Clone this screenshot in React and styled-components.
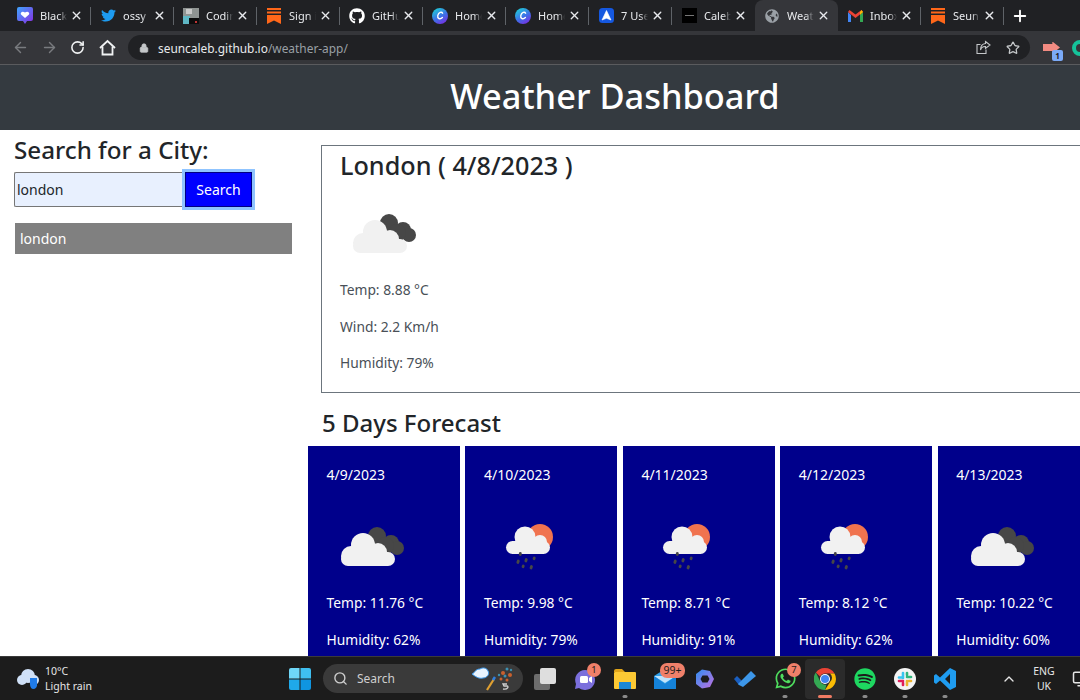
import React from 'react'
import styled, { createGlobalStyle } from 'styled-components'
import { ArrowLeft, ArrowRight, RotateCw, Lock, Star, Plus, X, Search as SearchGlyph, ChevronUp, Monitor } from 'lucide-react'
import { FaTwitter, FaGithub, FaGlobeAmericas, FaSpotify, FaWhatsapp } from 'react-icons/fa'

const GlobalStyle = createGlobalStyle`
  html, body {
    margin: 0;
    padding: 0;
    background: #fff;
    overflow: hidden;
  }
  * {
    box-sizing: border-box;
  }
  body {
    font-family: "Noto Sans", "Open Sans", "Liberation Sans", sans-serif;
    color: #212529;
  }
`

const Screen = styled.div`
  width: 1080px;
  height: 700px;
  display: flex;
  flex-direction: column;
  overflow: hidden;
`

/* browser chrome */
const TabStrip = styled.div`
  height: 31px;
  flex: none;
  background: #202124;
  display: flex;
  padding-left: 8px;
`

const TabItem = styled.div`
  position: relative;
  width: 83px;
  height: 31px;
  flex: none;
  display: flex;
  align-items: center;
  padding-left: 9px;
  background: ${p => p.$active ? '#35363a' : 'transparent'};
  border-radius: ${p => p.$active ? '8px 8px 0 0' : '0'};

  &::after {
    content: '';
    display: ${p => p.$divider ? 'block' : 'none'};
    position: absolute;
    right: 0;
    top: 7px;
    width: 1px;
    height: 18px;
    background: #5f6368;
  }
`

const TabIcon = styled.span`
  width: 16px;
  height: 16px;
  flex: none;
  display: flex;
  align-items: center;
  justify-content: center;
`

const TabTitle = styled.span`
  width: 27px;
  margin-left: 7px;
  overflow: hidden;
  white-space: nowrap;
  font-size: 11px;
  color: #e8eaed;
  -webkit-mask-image: linear-gradient(90deg, #000 70%, transparent);
  mask-image: linear-gradient(90deg, #000 70%, transparent);
`

const TabClose = styled(X)`
  margin-left: 3px;
  flex: none;
  color: #e8eaed;
`

const NewTab = styled(Plus)`
  margin: 7px 0 0 7px;
  color: #fff;
`

const Toolbar = styled.div`
  height: 34px;
  flex: none;
  background: #35363a;
  border-bottom: 1px solid #5a5b5e;
  display: flex;
  align-items: center;
  padding-left: 12px;
`

const NavButton = styled.span`
  width: 29px;
  flex: none;
  display: flex;
  align-items: center;
  color: ${p => p.$off ? '#797b7f' : '#f1f3f4'};
`

const Omnibox = styled.div`
  width: 902px;
  height: 25px;
  flex: none;
  border-radius: 13px;
  background: #202124;
  display: flex;
  align-items: center;
  padding: 0 10px 0 11px;
  font-size: 11.9px;
  color: #e8eaed;
`

const Url = styled.span`
  margin-left: 9px;
  flex: 1;
  span {
    color: #9aa0a6;
  }
`

const OmniIcon = styled.span`
  display: flex;
  margin-left: 15px;
  color: #c4c7c9;
`

const ExtSlot = styled.span`
  position: relative;
  width: 17px;
  height: 12px;
  margin-left: 13px;
  flex: none;
`

const Extension = styled.span`
  display: block;
  width: 17px;
  height: 12px;
  background: #f28b82;
  clip-path: polygon(0 20%, 55% 20%, 55% 0, 100% 50%, 55% 100%, 55% 80%, 0 80%);
`

const ExtBadge = styled.span`
  position: absolute;
  left: 9px;
  top: 8px;
  width: 11px;
  height: 11px;
  border-radius: 2px;
  background: #7baaf7;
  color: #202124;
  font-size: 8px;
  font-weight: 700;
  line-height: 11px;
  text-align: center;
`

const GrammarlyDot = styled.span`
  width: 16px;
  height: 16px;
  margin-left: 12px;
  flex: none;
  border-radius: 50%;
  border: 4px solid #15c39a;
`

/* page */
const Header = styled.header`
  height: 65px;
  flex: none;
  background: #343a40;
  color: #fff;
  display: flex;
  align-items: center;
  justify-content: center;
  padding: 0 0 3px 150px;
`

const Title = styled.h1`
  margin: 0;
  font-size: 34.4px;
  font-weight: 500;
  line-height: 1.2;
`

const Page = styled.main`
  flex: 1;
  min-height: 0;
  display: flex;
  overflow: hidden;
`

const Sidebar = styled.aside`
  width: 308px;
  flex: none;
  padding: 5px 0 0 14px;
`

const SideHeading = styled.h2`
  margin: 0;
  font-size: 24.2px;
  font-weight: 500;
  line-height: 30px;
`

const SearchForm = styled.form`
  display: flex;
  margin-top: 7px;
`

const SearchInput = styled.input`
  width: 171px;
  height: 35px;
  padding: 0 2px;
  border: 1px solid #767676;
  border-right: 0;
  border-radius: 2px 0 0 2px;
  background: #e8f0fe;
  font: inherit;
  font-size: 14px;
  color: #212529;
  outline: none;
`

const SearchButton = styled.button`
  width: 67px;
  height: 35px;
  padding: 0;
  border: 1px solid #000080;
  background: #0000ff;
  color: #fff;
  font: inherit;
  font-size: 14px;
  box-shadow: 0 0 0 3px #8fc4ff;
`

const History = styled.ul`
  list-style: none;
  margin: 16px 0 0 1px;
  padding: 0;
  width: 277px;
`

const HistoryItem = styled.li`
  height: 31px;
  padding-left: 5px;
  background: #808080;
  color: #fff;
  font-size: 14px;
  line-height: 31px;
`

const Content = styled.section`
  flex: 1;
  min-width: 0;
  padding-top: 15px;
`

const CurrentCard = styled.div`
  margin-left: 13px;
  width: 900px;
  height: 248px;
  border: 1px solid #6c757d;
  padding: 1px 0 0 18px;
`

const CityTitle = styled.h2`
  margin: 0;
  font-size: 25.2px;
  font-weight: 500;
  line-height: 36px;
`

const CurrentIcon = styled.div`
  margin-top: 26px;
  margin-left: 8px;
  height: 50px;
`

const Stat = styled.p`
  margin: 0 0 15.5px;
  font-size: 13.8px;
  line-height: 21px;
  color: ${p => p.$light ? '#fff' : '#495057'};
`

const CurrentStats = styled.div`
  margin-top: 20px;
`

const ForecastHeading = styled.h2`
  margin: 12px 0 0 14px;
  font-size: 24px;
  font-weight: 500;
  line-height: 36px;
`

const ForecastRow = styled.div`
  display: flex;
  gap: 5.4px;
  margin: 5px 0 0 0.1px;
  width: 790px;
`

const DayCard = styled.article`
  width: 152px;
  height: 300px;
  flex: none;
  padding: 18px 0 0 18.5px;
  background: #00008b;
  color: #fff;
`

const DayDate = styled.div`
  font-size: 14px;
  line-height: 21px;
`

const DayIcon = styled.div`
  height: 50px;
  margin: 37px 0 20px ${p => p.$indent}px;
`

/* taskbar */
const Taskbar = styled.footer`
  height: 44px;
  flex: none;
  background: #1c1c1c;
  border-top: 1px solid #3a3a3a;
  display: flex;
  align-items: center;
  color: #fff;
`

const Widget = styled.div`
  width: 280px;
  flex: none;
  display: flex;
  align-items: center;
  padding-left: 16px;
  gap: 5px;
`

const WidgetText = styled.div`
  font-size: 10.5px;
  line-height: 15px;
  color: #e6e6e6;
`

const TaskItem = styled.div`
  position: relative;
  width: 40px;
  height: 40px;
  flex: none;
  display: flex;
  align-items: center;
  justify-content: center;
  border-radius: 4px;
  background: ${p => p.$active ? '#2b2b2b' : 'transparent'};

  &::after {
    content: '';
    display: ${p => p.$mark ? 'block' : 'none'};
    position: absolute;
    bottom: 1px;
    left: 50%;
    transform: translateX(-50%);
    height: 3px;
    width: ${p => p.$mark === 'on' ? 14 : 5}px;
    border-radius: 2px;
    background: ${p => p.$mark === 'on' ? '#f07b63' : '#8a8a8a'};
  }
`

const Badge = styled.span`
  position: absolute;
  top: 4px;
  right: ${p => p.$wide ? 0 : 4}px;
  min-width: ${p => p.$wide ? 25 : 14}px;
  height: ${p => p.$wide ? 15 : 14}px;
  padding: 0 2px;
  border-radius: 7px;
  background: #f0806a;
  color: #1c1c1c;
  font-size: ${p => p.$wide ? 10.5 : 9.5}px;
  line-height: ${p => p.$wide ? 15 : 14}px;
  text-align: center;
`

const SearchPill = styled.div`
  width: 200px;
  height: 29px;
  margin: 0 2px 0 3px;
  flex: none;
  border-radius: 15px;
  background: #3a3a3a;
  display: flex;
  align-items: center;
  padding: 0 9px 0 10px;
  font-size: 12px;
  color: #cfcfcf;
`

const PillLabel = styled.span`
  margin-left: 9px;
  flex: 1;
`

const Tray = styled.div`
  display: flex;
  align-items: center;
  margin-left: 36px;
  color: #e6e6e6;
`

const Lang = styled.div`
  margin-left: 12px;
  width: 30px;
  text-align: center;
  font-size: 10.5px;
  line-height: 15px;
`

const TrayMonitor = styled(Monitor)`
  margin-left: 13px;
  flex: none;
`

/* drawings */
const SubstackIcon = () => (
  <svg width="14" height="16" viewBox="0 0 14 16" fill="#ff6719">
    <rect y="0" width="14" height="2" />
    <rect y="3.5" width="14" height="2" />
    <path d="M0 7h14v9l-7-3.6L0 16z" />
  </svg>
)

const BubbleIcon = () => (
  <svg width="16" height="17" viewBox="0 0 16 17">
    <defs>
      <linearGradient id="bub" x1="0" y1="0" x2="1" y2="1">
        <stop offset="0" stopColor="#3ea6ff" />
        <stop offset="1" stopColor="#8a2be2" />
      </linearGradient>
    </defs>
    <path d="M2 0h12a2 2 0 0 1 2 2v10a2 2 0 0 1-2 2h-4l-2 3-2-3H2a2 2 0 0 1-2-2V2a2 2 0 0 1 2-2z" fill="url(#bub)" />
    <path d="M8 11 4 7.4C2.8 5.6 5.6 3.4 8 5.6c2.4-2.2 5.2 0 4 1.8z" fill="#fff" />
  </svg>
)

const ThumbIcon = () => (
  <svg width="16" height="16" viewBox="0 0 16 16">
    <rect width="16" height="16" fill="#8f9492" />
    <rect x="0" y="8" width="7" height="8" fill="#5fb7c4" />
    <rect x="6" y="10" width="10" height="6" fill="#0c0c0c" />
    <rect x="3" y="1" width="6" height="5" fill="#c9c9c9" />
    <rect x="12" y="13" width="2" height="2" fill="#b33" />
  </svg>
)

const CanvaIcon = () => (
  <svg width="16" height="16" viewBox="0 0 16 16">
    <defs>
      <linearGradient id="can" x1="0.2" y1="0" x2="0.8" y2="1">
        <stop offset="0" stopColor="#1ed0d8" />
        <stop offset="0.55" stopColor="#3f6fe8" />
        <stop offset="1" stopColor="#7a2be2" />
      </linearGradient>
    </defs>
    <circle cx="8" cy="8" r="8" fill="url(#can)" />
    <path d="M10.6 5.2C9.8 3.4 6.6 4 5.8 7.4c-.7 3 2.2 4.6 4.6 2.2" fill="none" stroke="#fff" strokeWidth="1.4" strokeLinecap="round" />
  </svg>
)

const ArrowAppIcon = () => (
  <svg width="15" height="15" viewBox="0 0 15 15">
    <rect width="15" height="15" rx="3.5" fill="#1558e0" />
    <path d="M7.5 2.5 12 12 7.5 10.3 3 12z" fill="#fff" stroke="#fff" strokeLinejoin="round" strokeWidth=".6" />
  </svg>
)

const BlackIcon = () => (
  <svg width="15" height="15" viewBox="0 0 15 15">
    <rect width="15" height="15" fill="#000" />
    <rect x="3" y="7" width="9" height="1" fill="#777" />
  </svg>
)

const GmailIcon = () => (
  <svg width="15" height="12" viewBox="0 0 15 12">
    <path d="M0 2v10h3V5z" fill="#4285f4" />
    <path d="M12 5v7h3V2z" fill="#34a853" />
    <path d="M0 2 7.5 8 15 2 13.5 0 7.5 4.5 1.5 0z" fill="#ea4335" />
    <path d="M12 2v3l3-3-1.5-2z" fill="#fbbc04" />
  </svg>
)

const HomeGlyph = () => (
  <svg width="17" height="17" viewBox="0 0 17 17" fill="none" stroke="#f1f3f4" strokeWidth="1.8" strokeLinejoin="miter">
    <path d="M1 9 8.5 2 16 9" />
    <path d="M3.5 7.5V15.5h10V7.5" />
  </svg>
)

const ShareGlyph = () => (
  <svg width="15" height="15" viewBox="0 0 15 15" fill="none" stroke="#c4c7c9" strokeWidth="1.1">
    <path d="M10 9.5V13.5H1V4.5H4.5" />
    <path d="M9.5 1.5 14 5 9.5 8.5V6.5C7 6.3 5.3 7.5 4.5 10 4.5 6.5 6.5 3.8 9.5 3.5z" />
  </svg>
)

const DarkCloud = () => (
  <g fill="#474747">
    <circle cx="41" cy="14" r="9" />
    <circle cx="55" cy="21" r="8" />
    <circle cx="61" cy="26" r="7" />
    <circle cx="49" cy="24" r="9" />
  </g>
)

const OvercastIcon = () => (
  <svg width="75" height="50" viewBox="0 0 75 50">
    <DarkCloud />
    <g fill="#f1f1f1">
      <circle cx="27" cy="23" r="12" />
      <circle cx="42" cy="30" r="9" />
      <circle cx="15" cy="34" r="10" />
      <rect x="5" y="30" width="54" height="14" rx="7" />
    </g>
  </svg>
)

const RainIcon = () => (
  <svg width="75" height="50" viewBox="0 0 75 50">
    <circle cx="40" cy="15" r="13" fill="#f0734f" />
    <g fill="#f1f1f1">
      <circle cx="25" cy="15" r="10.5" />
      <circle cx="40" cy="20" r="7" />
      <rect x="6" y="19" width="44" height="13" rx="6.5" />
    </g>
    <g stroke="#474747" strokeWidth="2.8" strokeLinecap="round">
      <path d="M20.3 31.5v1" />
      <path d="M18.3 39l-.5 1.5" />
      <path d="M26.3 37.5l-.5 1.5" />
      <path d="M34.3 36l-.3 .8" />
      <path d="M23.3 44l-.3 .8" />
      <path d="M31.5 44.5l-.5 1.5" />
    </g>
  </svg>
)

const WidgetCloud = () => (
  <svg width="24" height="22" viewBox="0 0 24 22">
    <g fill="#cfe0f7">
      <circle cx="12" cy="8" r="7" />
      <circle cx="6" cy="12" r="5" />
      <circle cx="18" cy="12" r="5" />
    </g>
    <path d="M14 10h7v6a4 4 0 0 1-4 5c-2 0-3-3-3-5z" fill="#1f7be8" />
  </svg>
)

const WindowsLogo = () => (
  <svg width="22" height="22" viewBox="0 0 22 22">
    <path d="M0 2a2 2 0 0 1 2-2h8.5v10.5H0z" fill="#6fd7f8" />
    <path d="M11.5 0H20a2 2 0 0 1 2 2v8.5H11.5z" fill="#3fbff0" />
    <path d="M0 11.5h10.5V22H2a2 2 0 0 1-2-2z" fill="#1fa9ea" />
    <path d="M11.5 11.5H22V20a2 2 0 0 1-2 2h-8.5z" fill="#0f95e0" />
  </svg>
)

const PaintDoodle = () => (
  <svg width="42" height="26" viewBox="0 0 42 26">
    <path d="M0 8c3-1 3-5 8-5 3-2 7-1 8 2 2 3-1 7-5 7-4 1-7-1-11-4z" fill="#eaf4ff" stroke="#3b9bf0" />
    <path d="M15 24l7-11" stroke="#e0a030" strokeWidth="2.2" />
    <path d="M21 14l2-3" stroke="#2f7fe0" strokeWidth="2.5" />
    <g fill="#c9602d">
      <circle cx="31" cy="7" r="2" />
      <circle cx="38" cy="9" r="2" />
      <circle cx="29" cy="13" r="1.5" />
      <circle cx="35" cy="14" r="1.5" />
    </g>
    <g fill="#3d8fb0">
      <circle cx="35" cy="3" r="1.5" />
      <circle cx="33" cy="10" r="1.5" />
      <circle cx="39" cy="4" r="1.2" />
      <circle cx="27" cy="9" r="1.2" />
    </g>
    <path d="M35 18h-4l1 2h3c2 0 1 4-4 3" fill="none" stroke="#cfcfcf" strokeWidth="1.3" />
  </svg>
)

const TaskViewIcon = () => (
  <svg width="22" height="22" viewBox="0 0 22 22">
    <rect x="0" y="6" width="16" height="16" rx="2" fill="#6d6d6d" />
    <rect x="6" y="0" width="16" height="16" rx="2" fill="#dedede" />
  </svg>
)

const TeamsIcon = () => (
  <svg width="22" height="22" viewBox="0 0 22 22">
    <path d="M11 2a10 10 0 1 1-6 18l-4 1 1-5A10 10 0 0 1 11 2z" fill="#7b6fdc" />
    <rect x="6" y="8" width="8" height="7" rx="1.5" fill="#fff" />
    <path d="M15 10l3-2v7l-3-2z" fill="#fff" />
  </svg>
)

const FolderIcon = () => (
  <svg width="22" height="20" viewBox="0 0 22 20">
    <path d="M0 2a2 2 0 0 1 2-2h6l3 3H0z" fill="#e0a419" />
    <rect y="3" width="22" height="17" rx="1" fill="#fcc934" />
    <rect x="5" y="13" width="12" height="7" fill="#1b87d6" />
  </svg>
)

const MailIcon = () => (
  <svg width="22" height="20" viewBox="0 0 22 20">
    <path d="M0 7 11 0l11 7v13H0z" fill="#2f9fe8" />
    <path d="M0 7l11 7 11-7" fill="#bfe3fb" />
    <path d="M0 7l11 8 11-8v13H0z" fill="#1582d8" />
  </svg>
)

const CopilotIcon = () => (
  <svg width="20" height="20" viewBox="0 0 20 20">
    <defs>
      <linearGradient id="cop" x1="0" y1="0" x2="1" y2="1">
        <stop offset="0" stopColor="#2f8ef0" />
        <stop offset="1" stopColor="#c26fe0" />
      </linearGradient>
    </defs>
    <path d="M7 .5 15 2l4 8-4 8-8 1.5L1 15V5z" fill="url(#cop)" />
    <path d="M7.5 6.5h5L14.5 10l-2 3.5h-5L5.5 10z" fill="#1c1c1c" />
  </svg>
)

const TodoIcon = () => (
  <svg width="22" height="16" viewBox="0 0 22 16">
    <path d="M0 8l3-3 5 5-3 4z" fill="#1a5fc0" />
    <path d="M5 14l-1-1L17 0l5 5-13 11z" fill="#3d97ea" />
  </svg>
)

const ChromeIcon = () => (
  <svg width="22" height="22" viewBox="0 0 22 22">
    <path d="M11 0a11 11 0 0 1 9.5 5.5H11A5.5 5.5 0 0 0 6 8.5L1.9 4.5A11 11 0 0 1 11 0z" fill="#ea4335" />
    <path d="M20.5 5.5A11 11 0 0 1 11 22l5-8a5.5 5.5 0 0 0 0-8.5z" fill="#fbbc04" />
    <path d="M11 22A11 11 0 0 1 1.9 4.5L6.5 14a5.5 5.5 0 0 0 6 2.5z" fill="#34a853" />
    <circle cx="11" cy="11" r="5" fill="#fff" />
    <circle cx="11" cy="11" r="4" fill="#4285f4" />
  </svg>
)

const SlackIcon = () => (
  <svg width="22" height="22" viewBox="0 0 22 22">
    <circle cx="11" cy="11" r="11" fill="#f4f4f4" />
    <g strokeWidth="2.6" strokeLinecap="round">
      <path d="M9 5v5" stroke="#36c5f0" />
      <path d="M5 9.5h3" stroke="#36c5f0" />
      <path d="M17 9h-4" stroke="#2eb67d" />
      <path d="M13 5v2" stroke="#2eb67d" />
      <path d="M13 17v-4" stroke="#ecb22e" />
      <path d="M17 13h-2" stroke="#ecb22e" />
      <path d="M5 13h4" stroke="#e01e5a" />
      <path d="M9 17v-2" stroke="#e01e5a" />
    </g>
  </svg>
)

const VsCodeIcon = () => (
  <svg width="22" height="22" viewBox="0 0 22 22">
    <path d="M16 0l6 3v16l-6 3L6 12.5 2 16l-2-1.5v-7L2 6l4 3.5zm0 6-5 5 5 5z" fill="#1f9cf0" />
  </svg>
)

const tabs = [
  { title: 'Black Twitter', icon: <BubbleIcon />, divider: true },
  { title: 'ossy', icon: <FaTwitter size={15} color="#1d9bf0" />, divider: true },
  { title: 'Coding', icon: <ThumbIcon />, divider: true },
  { title: 'Sign in', icon: <SubstackIcon />, divider: true },
  { title: 'GitHub', icon: <FaGithub size={16} color="#fff" />, divider: true },
  { title: 'Home', icon: <CanvaIcon />, divider: true },
  { title: 'Home', icon: <CanvaIcon />, divider: true },
  { title: '7 Useful', icon: <ArrowAppIcon />, divider: true },
  { title: 'Caleb', icon: <BlackIcon /> },
  { title: 'Weather', icon: <FaGlobeAmericas size={14} color="#9aa0a6" />, active: true },
  { title: 'Inbox', icon: <GmailIcon />, divider: true },
  { title: 'Seun', icon: <SubstackIcon />, divider: true }
]

const forecast = [
  { date: '4/9/2023', temp: '11.76', humidity: '62', kind: 'cloud' },
  { date: '4/10/2023', temp: '9.98', humidity: '79', kind: 'rain' },
  { date: '4/11/2023', temp: '8.71', humidity: '91', kind: 'rain' },
  { date: '4/12/2023', temp: '8.12', humidity: '62', kind: 'rain' },
  { date: '4/13/2023', temp: '10.22', humidity: '60', kind: 'cloud' }
]

const App = () => (
  <Screen>
    <GlobalStyle />
    <TabStrip>
      {tabs.map((tab, i) => (
        <TabItem key={i} $active={tab.active} $divider={tab.divider}>
          <TabIcon>{tab.icon}</TabIcon>
          <TabTitle>{tab.title}</TabTitle>
          <TabClose size={13} strokeWidth={2.5} />
        </TabItem>
      ))}
      <NewTab size={18} strokeWidth={2.5} />
    </TabStrip>

    <Toolbar>
      <NavButton $off><ArrowLeft size={17} /></NavButton>
      <NavButton $off><ArrowRight size={17} /></NavButton>
      <NavButton><RotateCw size={15} strokeWidth={2.5} /></NavButton>
      <NavButton><HomeGlyph /></NavButton>
      <Omnibox>
        <Lock size={10} fill="#c4c7c9" color="#c4c7c9" />
        <Url>seuncaleb.github.io<span>/weather-app/</span></Url>
        <OmniIcon><ShareGlyph /></OmniIcon>
        <OmniIcon><Star size={14} strokeWidth={2.2} /></OmniIcon>
      </Omnibox>
      <ExtSlot>
        <Extension />
        <ExtBadge>1</ExtBadge>
      </ExtSlot>
      <GrammarlyDot />
    </Toolbar>

    <Header>
      <Title>Weather Dashboard</Title>
    </Header>

    <Page>
      <Sidebar>
        <SideHeading>Search for a City:</SideHeading>
        <SearchForm onSubmit={e => e.preventDefault()}>
          <SearchInput defaultValue="london" />
          <SearchButton type="button">Search</SearchButton>
        </SearchForm>
        <History>
          <HistoryItem>london</HistoryItem>
        </History>
      </Sidebar>

      <Content>
        <CurrentCard>
          <CityTitle>London ( 4/8/2023 )</CityTitle>
          <CurrentIcon><OvercastIcon /></CurrentIcon>
          <CurrentStats>
            <Stat>Temp: 8.88 °C</Stat>
            <Stat>Wind: 2.2 Km/h</Stat>
            <Stat>Humidity: 79%</Stat>
          </CurrentStats>
        </CurrentCard>
        <ForecastHeading>5 Days Forecast</ForecastHeading>
        <ForecastRow>
          {forecast.map(day => (
            <DayCard key={day.date}>
              <DayDate>{day.date}</DayDate>
              <DayIcon $indent={day.kind === 'rain' ? 16 : 9.5}>
                {day.kind === 'rain' ? <RainIcon /> : <OvercastIcon />}
              </DayIcon>
              <Stat $light>Temp: {day.temp} °C</Stat>
              <Stat $light>Humidity: {day.humidity}%</Stat>
            </DayCard>
          ))}
        </ForecastRow>
      </Content>
    </Page>

    <Taskbar>
      <Widget>
        <WidgetCloud />
        <WidgetText>
          <div>10°C</div>
          <div>Light rain</div>
        </WidgetText>
      </Widget>
      <TaskItem><WindowsLogo /></TaskItem>
      <SearchPill>
        <SearchGlyph size={15} color="#cfcfcf" strokeWidth={2.2} />
        <PillLabel>Search</PillLabel>
        <PaintDoodle />
      </SearchPill>
      <TaskItem><TaskViewIcon /></TaskItem>
      <TaskItem><TeamsIcon /><Badge>1</Badge></TaskItem>
      <TaskItem $mark="dot"><FolderIcon /></TaskItem>
      <TaskItem><MailIcon /><Badge $wide>99+</Badge></TaskItem>
      <TaskItem><CopilotIcon /></TaskItem>
      <TaskItem><TodoIcon /></TaskItem>
      <TaskItem $mark="dot"><FaWhatsapp size={23} color="#4fdd5e" /><Badge>7</Badge></TaskItem>
      <TaskItem $active $mark="on"><ChromeIcon /></TaskItem>
      <TaskItem $mark="dot"><FaSpotify size={22} color="#1ed760" /></TaskItem>
      <TaskItem $mark="dot"><SlackIcon /></TaskItem>
      <TaskItem $mark="dot"><VsCodeIcon /></TaskItem>
      <Tray>
        <ChevronUp size={16} />
        <Lang>
          <div>ENG</div>
          <div>UK</div>
        </Lang>
        <TrayMonitor size={18} />
      </Tray>
    </Taskbar>
  </Screen>
)

export default App
